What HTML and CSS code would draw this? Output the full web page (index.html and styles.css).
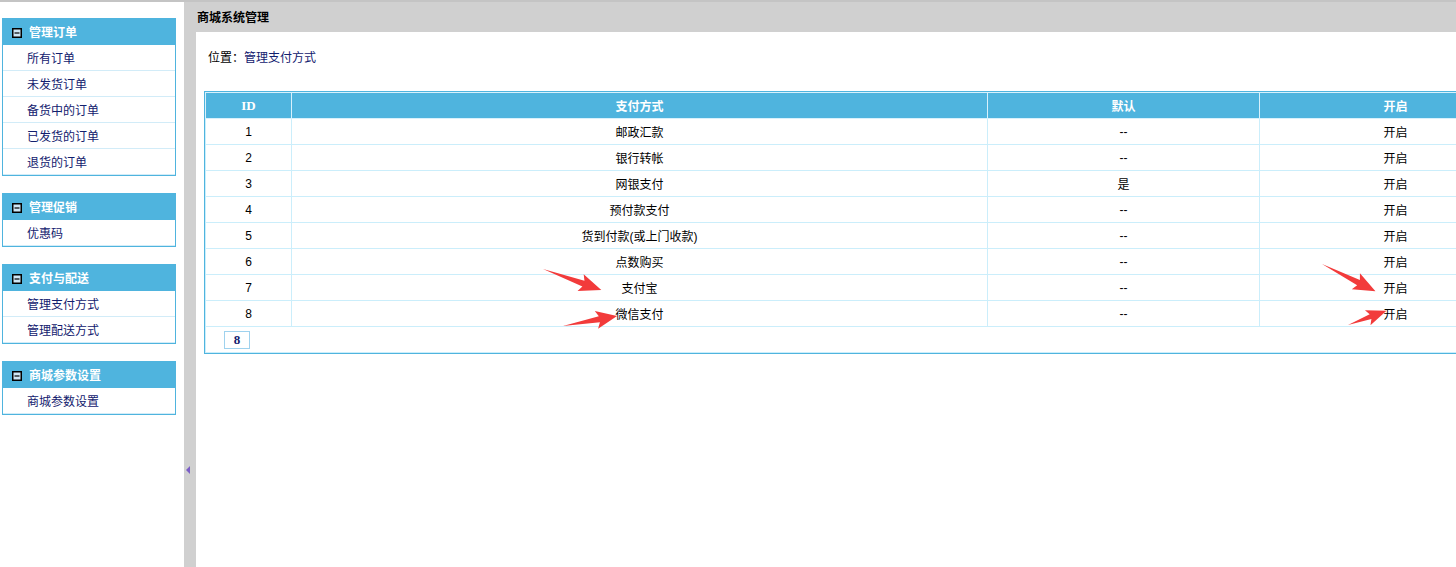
FILE: index.html
```html
<!DOCTYPE html>
<html lang="zh-CN">
<head>
<meta charset="utf-8">
<title>商城系统管理</title>
<link rel="stylesheet" href="styles.css">
</head>
<body>
<div class="page">
  <aside class="sidebar">
    <div class="menu-box">
      <div class="menu-head"><svg class="toggle" viewBox="0 0 10 10" width="10" height="10"><rect x="0.75" y="0.75" width="8.5" height="8.5" fill="#cfe6f4" stroke="#000" stroke-width="1.5"/><line x1="2.5" y1="5" x2="7.5" y2="5" stroke="#000" stroke-width="1.2"/></svg>管理订单</div>
      <div class="menu-item">所有订单</div>
      <div class="menu-item">未发货订单</div>
      <div class="menu-item">备货中的订单</div>
      <div class="menu-item">已发货的订单</div>
      <div class="menu-item">退货的订单</div>
    </div>
    <div class="menu-box">
      <div class="menu-head"><svg class="toggle" viewBox="0 0 10 10" width="10" height="10"><rect x="0.75" y="0.75" width="8.5" height="8.5" fill="#cfe6f4" stroke="#000" stroke-width="1.5"/><line x1="2.5" y1="5" x2="7.5" y2="5" stroke="#000" stroke-width="1.2"/></svg>管理促销</div>
      <div class="menu-item">优惠码</div>
    </div>
    <div class="menu-box">
      <div class="menu-head"><svg class="toggle" viewBox="0 0 10 10" width="10" height="10"><rect x="0.75" y="0.75" width="8.5" height="8.5" fill="#cfe6f4" stroke="#000" stroke-width="1.5"/><line x1="2.5" y1="5" x2="7.5" y2="5" stroke="#000" stroke-width="1.2"/></svg>支付与配送</div>
      <div class="menu-item">管理支付方式</div>
      <div class="menu-item">管理配送方式</div>
    </div>
    <div class="menu-box">
      <div class="menu-head"><svg class="toggle" viewBox="0 0 10 10" width="10" height="10"><rect x="0.75" y="0.75" width="8.5" height="8.5" fill="#cfe6f4" stroke="#000" stroke-width="1.5"/><line x1="2.5" y1="5" x2="7.5" y2="5" stroke="#000" stroke-width="1.2"/></svg>商城参数设置</div>
      <div class="menu-item">商城参数设置</div>
    </div>
  </aside>
  <div class="splitter"><span class="collapse-arrow"></span></div>
  <main class="main">
    <div class="main-title">商城系统管理</div>
    <div class="main-body">
      <div class="location">位置：<span class="loc-link">管理支付方式</span></div>
      <div class="grid-wrap">
        <table class="grid">
          <colgroup>
            <col class="c-id"><col class="c-name"><col class="c-def"><col class="c-on">
          </colgroup>
          <thead>
            <tr><th class="th-id">ID</th><th>支付方式</th><th>默认</th><th>开启</th></tr>
          </thead>
          <tbody>
            <tr><td>1</td><td>邮政汇款</td><td>--</td><td>开启</td></tr>
            <tr><td>2</td><td>银行转帐</td><td>--</td><td>开启</td></tr>
            <tr><td>3</td><td>网银支付</td><td>是</td><td>开启</td></tr>
            <tr><td>4</td><td>预付款支付</td><td>--</td><td>开启</td></tr>
            <tr><td>5</td><td>货到付款(或上门收款)</td><td>--</td><td>开启</td></tr>
            <tr><td>6</td><td>点数购买</td><td>--</td><td>开启</td></tr>
            <tr><td>7</td><td>支付宝</td><td>--</td><td>开启</td></tr>
            <tr><td>8</td><td>微信支付</td><td>--</td><td>开启</td></tr>
            <tr><td colspan="4" class="pager-cell"><span class="page-num">8</span></td></tr>
          </tbody>
        </table>
      </div>
    </div>
  </main>
</div>
<svg class="annotations" width="1456" height="567" viewBox="0 0 1456 567">
  <g fill="#f23b3b">
    <polygon transform="translate(543 269) rotate(19.9)" points="0,0 43,-3 40,-9 62,0 40,9 43,3"/>
    <polygon transform="translate(563 326) rotate(-10.5)" points="0,0 37,-3 34,-9 55,0 34,9 37,3"/>
    <polygon transform="translate(1322 264) rotate(27)" points="0,0 41,-3 38,-9 60,0 38,9 41,3"/>
    <polygon transform="translate(1348 325) rotate(-20.2)" points="0,0 24,-2.5 21,-8 41,0 21,8 24,2.5"/>
  </g>
</svg>
</body>
</html>
```
FILE: styles.css
```css
html, body {
  margin: 0;
  padding: 0;
  background: #fff;
}
body {
  font-family: "Liberation Sans", "Noto Sans CJK SC", sans-serif;
  font-size: 12px;
  color: #000;
  overflow: hidden;
  width: 1456px;
  height: 567px;
  position: relative;
}
.page {
  display: flex;
  border-top: 2px solid #c4c4c4;
  height: 565px;
  overflow: hidden;
}
.sidebar {
  width: 184px;
  flex: none;
  padding-top: 16px;
  background: #fff;
}
.menu-box {
  width: 172px;
  margin: 0 0 17px 2px;
  border: 1px solid #4fb4de;
}
.menu-head {
  height: 24px;
  padding-top: 2px;
  background: #4fb4de;
  color: #fff;
  font-weight: bold;
  line-height: 24px;
  display: flex;
  align-items: center;
  padding-left: 9px;
}
.toggle {
  margin-right: 7px;
  flex: none;
}
.menu-item {
  height: 22px;
  padding-top: 3px;
  line-height: 22px;
  border-bottom: 1px solid #d2ecf8;
  padding-left: 24px;
  color: #12206e;
}
.splitter {
  width: 12px;
  flex: none;
  background: #d0d0d0;
  padding-top: 464px;
  box-sizing: border-box;
}
.collapse-arrow {
  display: block;
  width: 0;
  height: 0;
  margin-left: 2px;
  border-right: 4px solid #7b5ec6;
  border-top: 4px solid transparent;
  border-bottom: 4px solid transparent;
}
.main {
  flex: 1;
  min-width: 0;
  overflow: hidden;
  background: #fff;
}
.main-title {
  height: 28px;
  padding-top: 2px;
  line-height: 28px;
  background: #d0d0d0;
  font-weight: bold;
  padding-left: 1px;
  color: #000;
}
.main-body {
  padding: 18px 0 0 8px;
}
.location {
  line-height: 16px;
  padding-left: 4px;
  color: #000;
}
.loc-link {
  color: #12206e;
}
.grid-wrap {
  margin-top: 25px;
  width: 1326px;
  border: 1px solid #4fb4de;
}
.grid {
  width: 1326px;
  border-collapse: collapse;
  table-layout: fixed;
}
.c-id { width: 86px; }
.c-name { width: 696px; }
.c-def { width: 272px; }
.c-on { width: 272px; }
.grid th,
.grid td {
  height: 25px;
  padding: 0;
  text-align: center;
  vertical-align: middle;
  border: 1px solid #cbeefb;
  font-size: 12px;
}
.grid th {
  background: #4fb4de;
  color: #fff;
  font-weight: bold;
  border-color: #d8f1fc;
}
.grid .th-id {
  font-family: "Liberation Serif", serif;
  font-size: 13px;
}
.grid td.pager-cell {
  text-align: left;
  padding-left: 18px;
}
.page-num {
  display: inline-block;
  width: 24px;
  height: 16px;
  line-height: 16px;
  border: 1px solid #9fd2ee;
  text-align: center;
  font-family: "Liberation Serif", serif;
  font-weight: bold;
  font-size: 13px;
  color: #12206e;
  vertical-align: middle;
}
.annotations {
  position: absolute;
  left: 0;
  top: 0;
  pointer-events: none;
}
```
